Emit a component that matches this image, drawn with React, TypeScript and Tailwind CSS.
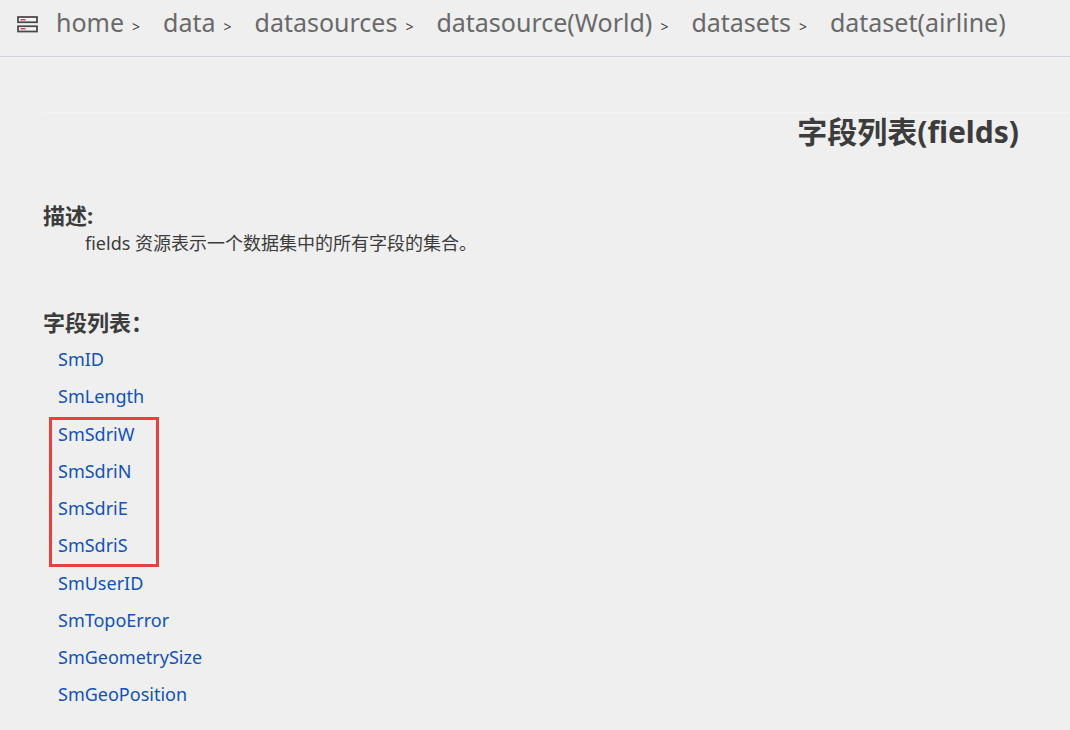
interface Crumb {
  label: string;
  href: string;
}

const CRUMBS: Crumb[] = [
  { label: 'home', href: '#home' },
  { label: 'data', href: '#data' },
  { label: 'datasources', href: '#datasources' },
  { label: 'datasource(World)', href: '#world' },
  { label: 'datasets', href: '#datasets' },
  { label: 'dataset(airline)', href: '#airline' }
];

const LEADING_FIELDS = ['SmID', 'SmLength'];
const BOUNDS_FIELDS = ['SmSdriW', 'SmSdriN', 'SmSdriE', 'SmSdriS'];
const OTHER_FIELDS = ['SmUserID', 'SmTopoError', 'SmGeometrySize', 'SmGeoPosition'];

function ServerIcon() {
  return (
    <svg className="mt-1.5 h-[17px] w-[21px] shrink-0" viewBox="0 0 21 17" fill="none" aria-hidden="true">
      <rect x="1" y="1" width="19" height="5.25" fill="#f4f4f4" stroke="#4a464a" strokeWidth="1.75" />
      <rect x="1" y="10.25" width="19" height="5.25" fill="#f4f4f4" stroke="#4a464a" strokeWidth="1.75" />
      <path d="M3.5 3.75h5M3.5 12.75h5" stroke="#cf4860" strokeWidth="1.5" />
    </svg>
  );
}

function FieldList({ fields }: { fields: string[] }) {
  return (
    <ul>
      {fields.map((field) => (
        <li key={field} className="flex h-[37px] items-center">
          <a href={`#${field}`} className="hover:underline">
            {field}
          </a>
        </li>
      ))}
    </ul>
  );
}

export default function App() {
  return (
    <div className="min-h-screen bg-[#efefef] pb-4 font-['Noto_Sans','Noto_Sans_CJK_SC',sans-serif] text-[#3c3c3c]">
      <nav aria-label="breadcrumb" className="flex h-[57px] items-start border-b border-[#ced3df] pt-2.5 pl-[17px]">
        <ServerIcon />
        <ol className="flex pl-[18px] whitespace-nowrap">
          {CRUMBS.map((crumb, index) => (
            <li key={crumb.label} className="flex items-baseline leading-6">
              <a href={crumb.href} className="text-[25px] leading-6 text-[#696969]">
                {crumb.label}
              </a>
              {index < CRUMBS.length - 1 && <span className="w-[39px] pl-2 text-sm">&gt;</span>}
            </li>
          ))}
        </ol>
      </nav>

      <main className="pt-[55px] pl-[43px]">
        <h1 className="border-t border-[#f3f3f3] pr-[51px] text-right text-[30px] leading-[38px] font-bold">
          字段列表(fields)
        </h1>

        <section className="pt-12">
          <h2 className="text-[22px] leading-8 font-bold">描述:</h2>
          <p className="pl-[42px] text-[18px] leading-6">fields 资源表示一个数据集中的所有字段的集合。</p>
        </section>

        <section className="pt-[51px]">
          <h2 className="text-[22px] leading-8 font-bold">字段列表：</h2>
          <div className="pt-[3px] pl-[15px] text-[18px] text-[#1152bb]">
            <FieldList fields={LEADING_FIELDS} />
            <div className="relative py-px">
              <FieldList fields={BOUNDS_FIELDS} />
              <div className="pointer-events-none absolute top-0.5 -left-[9px] h-[150px] w-[110px] border-3 border-[#e8403f]" />
            </div>
            <FieldList fields={OTHER_FIELDS} />
          </div>
        </section>
      </main>
    </div>
  );
}
